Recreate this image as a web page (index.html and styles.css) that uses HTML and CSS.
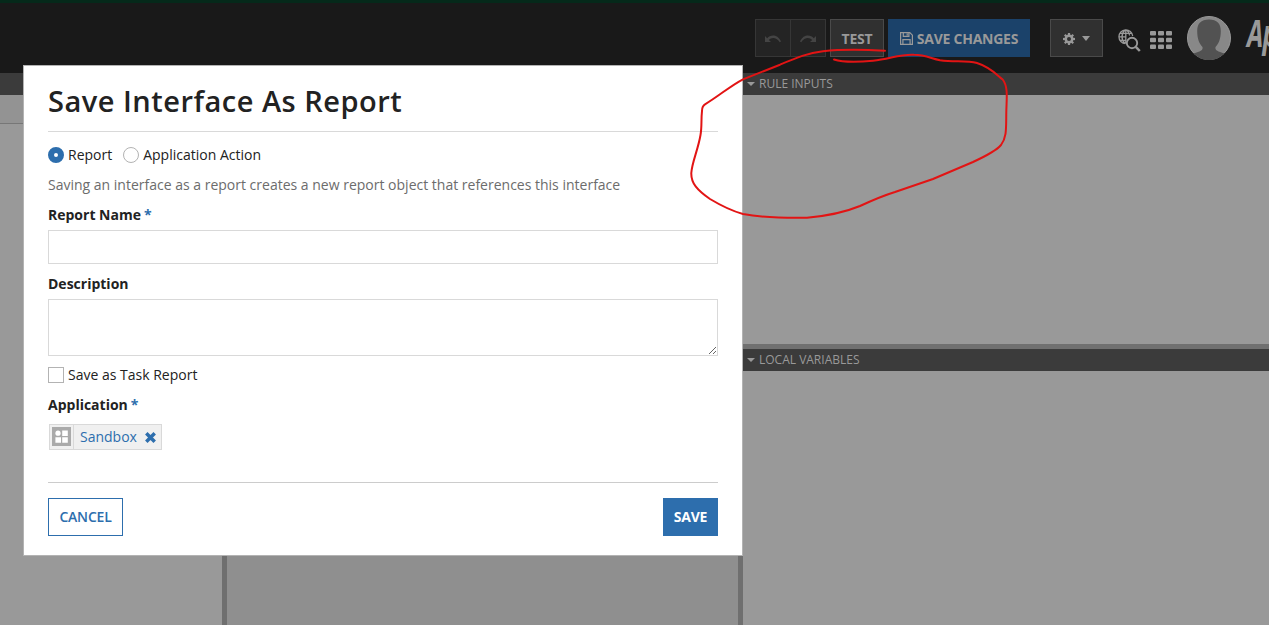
FILE: index.html
```html
<!DOCTYPE html>
<html lang="en">
<head>
    <meta charset="UTF-8">
    <meta name="viewport" content="width=device-width, initial-scale=1.0">
    <title>Save Interface As Report</title>
    <link rel="stylesheet" href="styles.css">
</head>
<body>
    <header class="topbar">
        <div class="btn-group">
            <button class="tool-btn disabled" aria-label="Undo">
                <svg width="18" height="12" viewBox="0 0 18 12"><path d="M1 3v6h6L4.800 6.900C7 4.500 12 3.400 15.800 9.200L17 8.500C13.500 1 6.500 1.500 3.200 5.200z"/></svg>
            </button>
            <button class="tool-btn disabled" aria-label="Redo">
                <svg width="18" height="12" viewBox="0 0 18 12"><path d="M17 3v6h-6l2.200-2.100C11 4.500 6 3.400 2.200 9.200L1 8.500C4.500 1 11.500 1.500 14.800 5.200z"/></svg>
            </button>
        </div>
        <button class="test-btn">TEST</button>
        <button class="save-changes">
            <svg width="13" height="13" viewBox="0 0 13 13"><path d="M.6.6h9.200l2.600 2.600v9.200H.6zM3.300.6v3.800h5.600V.6M2.900 12.400V7.600h7.200v4.800M7.200 1.500v2" fill="none" stroke="currentColor" stroke-width="1.200"/></svg>
            <span>SAVE CHANGES</span>
        </button>
        <button class="gear-btn" aria-label="Settings">
            <svg width="12" height="12" viewBox="0 0 12 12"><g fill="currentColor"><path d="M4.900 0h2.200v12H4.900z"/><path d="M0 4.900h12v2.200H0z"/><path d="M2.500 1 11 9.500 9.500 11 1 2.500z"/><path d="M9.500 1 11 2.500 2.500 11 1 9.500z"/><circle cx="6" cy="6" r="4.500"/></g><circle class="gear-hole" cx="6" cy="6" r="2"/></svg>
            <span class="caret"></span>
        </button>
        <svg class="globe" width="23" height="23" viewBox="0 0 23 23">
            <g fill="none" stroke="#999" stroke-width="1.300">
                <path d="M7.500 14.600A6.900 6.900 0 1 1 14.700 7M7.800 1v13.500M1 7.800h7M2 4.300h11.600M2 11.300h5.500M7 1C3 4.500 3 11 7 14.600M8.600 1c2 1.700 2.900 3.500 3 5.500"/>
                <circle cx="14" cy="14" r="5.200" stroke-width="1.900"/>
                <path d="m17.800 17.800 4 4.200" stroke-width="2.500"/>
            </g>
        </svg>
        <svg class="apps" width="22" height="18" viewBox="0 0 22 18">
            <g fill="#999">
                <rect width="6" height="4.600" rx="1"/><rect x="8" width="6" height="4.600" rx="1"/><rect x="16" width="6" height="4.600" rx="1"/>
                <rect y="6.700" width="6" height="4.600" rx="1"/><rect x="8" y="6.700" width="6" height="4.600" rx="1"/><rect x="16" y="6.700" width="6" height="4.600" rx="1"/>
                <rect y="13.400" width="6" height="4.600" rx="1"/><rect x="8" y="13.400" width="6" height="4.600" rx="1"/><rect x="16" y="13.400" width="6" height="4.600" rx="1"/>
            </g>
        </svg>
        <svg class="avatar" width="44" height="44" viewBox="0 0 44 44">
            <circle cx="22" cy="22" r="21.500" fill="#888" stroke="#999"/>
            <path d="M22 3.500c-8 0-11.800 4-11.800 11.500 0 8 2.300 13 5.300 16 .5 3-1 4-9 6.500A21.500 21.500 0 0 0 37.500 37.500C29.500 35 28 34 28.500 31c3-3 5.300-8 5.300-16C33.800 7.500 30 3.500 22 3.500z" fill="#525252"/>
        </svg>
        <div class="logo">Ap</div>
    </header>

    <main class="workspace">
        <section class="pane left">
            <div class="pane-title"></div>
            <div class="pane-toolbar"></div>
        </section>
        <section class="pane middle">
            <div class="pane-title"></div>
        </section>
        <section class="pane right">
            <div class="pane-title"><span class="caret"></span>RULE INPUTS</div>
            <div class="inputs-body"></div>
            <div class="pane-title dark"><span class="caret"></span>LOCAL VARIABLES</div>
        </section>
    </main>

    <div class="modal">
        <h1>Save Interface As Report</h1>
        <div class="radios">
            <span class="radio checked"></span><label class="first">Report</label>
            <span class="radio"></span><label>Application Action</label>
        </div>
        <p class="help">Saving an interface as a report creates a new report object that references this interface</p>
        <div class="field-label">Report Name<span class="required">*</span></div>
        <input class="name-input" type="text">
        <div class="field-label">Description</div>
        <textarea class="description"></textarea>
        <div class="check-row"><span class="checkbox"></span><label>Save as Task Report</label></div>
        <div class="field-label">Application<span class="required">*</span></div>
        <div class="token">
            <span class="token-icon">
                <svg width="19" height="19" viewBox="0 0 19 19"><path fill="#aaa" d="M0 0h19v19H0z"/><g fill="#fff"><circle cx="6" cy="6.200" r="2.600"/><path d="M10.200 3.500h5.600v5.400h-5.600zM3.400 10.300H9v5.400H3.400zM10.200 10.300h5.600v5.400h-5.600z"/></g></svg>
            </span>
            <span class="token-name">Sandbox</span>
            <svg width="11" height="11" viewBox="0 0 11 11"><path d="m1.300 1.300 8.400 8.400M9.700 1.300 1.300 9.700" stroke="#2d6ead" stroke-width="3.500"/></svg>
        </div>
        <div class="modal-footer">
            <button class="cancel">CANCEL</button>
            <button class="save">SAVE</button>
        </div>
    </div>

    <!-- freehand marker over the toolbar and rule inputs -->
    <svg class="marker" width="1269" height="625" viewBox="0 0 1269 625">
        <path d="M885 50.700C864 49.500 840 49.300 823 51.200C808 53 797 57.500 780 64.700L743 79.300C730 86 719 96 705 104.300Q702 106 702 111C701 120 702 127 700.500 135C698 150 692 162 691.300 173C691 183 697 190 710 199C720 205 732 211 743 214C764 218 786 218 807 217.700C827 216 843 213 860 206C873 200 882 196 895 192L933 179L973 162C986 156 996 151 1001 145C1007 137 1006 128 1006.300 112C1006.500 99 1008.500 87 1002.700 79.500C997 75 990 67 977 63C966 60 954 62.500 940 60.300C930 58 925 55 914 54.800C900 54 890 59 873 60.800C860 62 843 62.500 834 59.500"/>
    </svg>
</body>
</html>
```

FILE: styles.css
```css
* {
    box-sizing: border-box;
}
body {
    margin: 0;
    height: 625px;
    overflow: hidden;
    display: flex;
    flex-direction: column;
    background: #999;
    color: #222;
    font-family: "Open Sans", sans-serif;
    font-size: 14px;
}
button {
    font-family: inherit;
    font-size: 14px;
    font-weight: 600;
    height: 38px;
    padding: 0 0 2px;
    border-radius: 0;
    display: flex;
    align-items: center;
    justify-content: center;
    flex-shrink: 0;
}
svg {
    display: block;
    flex-shrink: 0;
}
h1, p {
    margin: 0;
}
.topbar {
    height: 73px;
    flex-shrink: 0;
    display: flex;
    align-items: center;
    padding: 0 0 0 755px;
    border-top: 3px solid #05291a;
    background: #191919;
    overflow: hidden;
}
.btn-group {
    display: flex;
    flex-shrink: 0;
    width: 71px;
    margin-right: 4px;
}
.tool-btn {
    width: 36px;
    background: #242424;
    border: 1px solid #363636;
    color: #444;
    padding-top: 4px;
}
.tool-btn + .tool-btn {
    border-left: 0;
    width: 35px;
}
.tool-btn svg {
    fill: #444;
}
.test-btn {
    width: 54px;
    margin-right: 4px;
    padding: 0;
    background: #303030;
    border: 1px solid #4a4a4a;
    color: #999;
    font-weight: 700;
    letter-spacing: -0.2px;
}
.save-changes {
    width: 142px;
    margin-right: 20px;
    padding: 0;
    gap: 4px;
    background: #1b426a;
    border: 0;
    color: #999;
    font-weight: 700;
    letter-spacing: -0.25px;
}
.gear-btn {
    width: 53px;
    margin-right: 15px;
    padding: 0;
    gap: 7px;
    background: #303030;
    border: 1px solid #4a4a4a;
    color: #999;
}
.gear-btn svg {
    margin-top: 1px;
}
.gear-hole {
    fill: #303030;
}
.caret {
    border: 4px solid transparent;
    border-top: 4px solid #999;
    border-bottom: 0;
}
.gear-btn .caret {
    border-width: 5px 4.5px 0;
    margin-top: 1px;
}
.globe {
    margin-right: 9px;
    margin-top: 4px;
}
.apps {
    margin-right: 15px;
    margin-top: 4px;
}
.avatar {
    margin-right: 16px;
}
.logo {
    color: #999;
    font-family: "Open Sans", sans-serif;
    font-size: 38px;
    font-style: italic;
    font-weight: 700;
    line-height: 44px;
    letter-spacing: -1px;
    transform: scaleX(0.68);
    transform-origin: left;
    margin-top: -12px;
}
.workspace {
    flex: 1;
    display: flex;
}
.left {
    width: 227px;
    border-right: 5px solid #6f6f6f;
}
.middle {
    width: 516px;
    border-right: 5px solid #6f6f6f;
    background: #8f8f8f;
}
.right {
    flex: 1;
}
.pane-title {
    height: 22px;
    display: flex;
    align-items: center;
    gap: 4px;
    padding: 0 0 2px 4px;
    background: #3b3b3b;
    color: #999;
    font-size: 12px;
}
.pane-title .caret {
    margin-top: 2px;
}
.pane-toolbar {
    height: 29px;
    background: #939393;
    border-bottom: 1px solid #777;
}
.inputs-body {
    height: 254px;
    border-bottom: 5px solid #707070;
}
.modal {
    position: absolute;
    left: 23px;
    top: 65px;
    width: 720px;
    height: 491px;
    padding: 0 24px;
    background: #fff;
    border: 1px solid #b3b3b3;
}
.modal h1 {
    height: 66px;
    padding-top: 15px;
    border-bottom: 1px solid #d9d9d9;
    font-size: 29px;
    font-weight: 600;
    line-height: 40px;
    letter-spacing: 0.5px;
}
.radios, .check-row {
    display: flex;
    align-items: center;
    gap: 4px;
}
.radios label, .check-row label {
    height: 20px;
    line-height: 19px;
}
.radios {
    height: 20px;
    margin-top: 13px;
}
.radios .first {
    margin-right: 7px;
}
.radio {
    width: 16px;
    height: 16px;
    border: 1px solid #b3b3b3;
    border-radius: 50%;
}
.radio.checked {
    border: 6px solid #2d6ead;
}
.help {
    height: 20px;
    margin-top: 10px;
    color: #6c6c6c;
    line-height: 20px;
}
.field-label {
    height: 20px;
    margin-top: 10px;
    font-weight: 700;
    line-height: 20px;
}
.required {
    margin-left: 3px;
    color: #2d6ead;
}
.name-input, .description {
    display: block;
    width: 670px;
    border: 1px solid #d9d9d9;
    border-radius: 0;
    background: #fff;
}
.name-input {
    height: 34px;
    margin: 5px 0 10px;
}
.description {
    height: 57px;
    margin: 5px 0 9px;
}
.check-row {
    height: 20px;
}
.checkbox {
    width: 16px;
    height: 16px;
    border: 1px solid #b3b3b3;
}
.token {
    display: flex;
    align-items: center;
    width: 113px;
    height: 26px;
    margin: 9px 0 0 1px;
    background: #f0f0f0;
    border: 1px solid #d9d9d9;
    color: #2d6ead;
}
.token-icon {
    width: 24px;
    height: 24px;
    padding: 2px;
    border-right: 1px solid #d9d9d9;
}
.token-name {
    width: 58px;
    height: 24px;
    line-height: 23px;
    margin: 0 7px 0 6px;
}
.modal-footer {
    display: flex;
    justify-content: space-between;
    margin-top: 32px;
    padding-top: 15px;
    border-top: 1px solid #ccc;
}
.cancel {
    width: 75px;
    background: #fff;
    border: 1px solid #2d6ead;
    color: #2d6ead;
    font-weight: 600;
    letter-spacing: -0.2px;
}
.save {
    width: 55px;
    background: #2d6ead;
    border: 0;
    color: #fff;
    font-weight: 700;
    letter-spacing: -0.2px;
}
.marker {
    position: absolute;
    left: 0;
    top: 0;
    pointer-events: none;
    fill: none;
    stroke: #e21414;
    stroke-width: 2;
    stroke-linecap: round;
}
```
